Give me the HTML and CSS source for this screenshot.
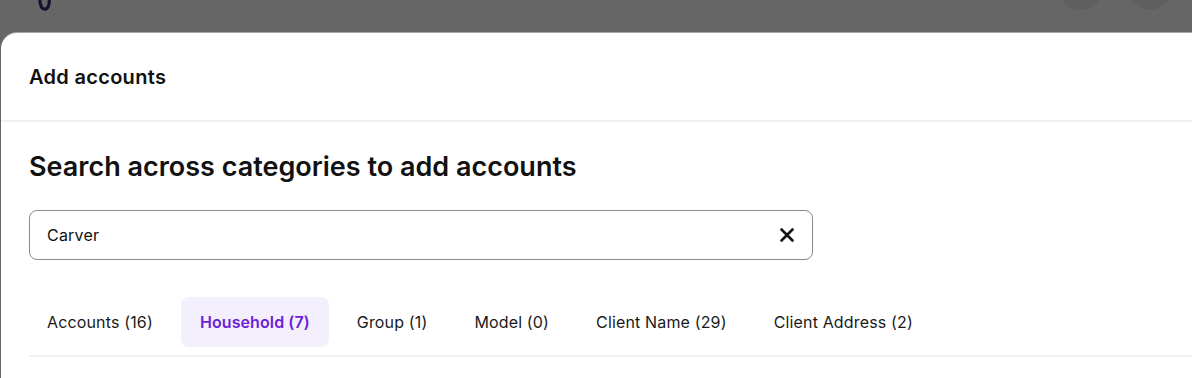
FILE: index.html
```html
<!DOCTYPE html>
<html lang="en">
<head>
<meta charset="utf-8">
<title>Add accounts</title>
<link rel="stylesheet" href="styles.css">
</head>
<body>
<div class="topbar">
  <svg class="logo" width="16" height="24" viewBox="0 0 16 24" aria-hidden="true">
    <path d="M4 6 C2 12 3 20 7 21 C11 22 13 16 12 10" fill="none" stroke="#1b1030" stroke-width="3.2" stroke-linecap="round"/>
  </svg>
  <div class="top-actions">
    <span class="circle"></span>
    <span class="circle"></span>
  </div>
</div>
<div class="modal">
  <div class="modal-header">Add accounts</div>
  <div class="modal-body">
    <h1 class="heading">Search across categories to add accounts</h1>
    <div class="search">
      <span class="search-value">Carver</span>
      <svg class="clear" width="16" height="16" viewBox="0 0 16 16" aria-hidden="true">
        <path d="M2.5 2.5 L13.5 13.5 M13.5 2.5 L2.5 13.5" stroke="#111" stroke-width="2.6" stroke-linecap="round"/>
      </svg>
    </div>
    <div class="tabs">
      <span class="tab">Accounts (16)</span>
      <span class="tab active">Household (7)</span>
      <span class="tab">Group (1)</span>
      <span class="tab">Model (0)</span>
      <span class="tab">Client Name (29)</span>
      <span class="tab">Client Address (2)</span>
    </div>
  </div>
</div>
</body>
</html>
```

FILE: styles.css
```css
html, body {
  margin: 0;
  padding: 0;
  height: 100%;
}
body {
  background: #666666;
  font-family: Inter, "Noto Sans", "Liberation Sans", sans-serif;
  color: #111;
  overflow: hidden;
}
.topbar {
  height: 33px;
  display: flex;
  justify-content: space-between;
  align-items: flex-start;
  padding: 0 20px 0 37px;
  overflow: hidden;
}
.logo {
  margin-top: -12px;
}
.top-actions {
  display: flex;
  gap: 25px;
  margin-top: -34px;
}
.circle {
  width: 44px;
  height: 44px;
  border-radius: 50%;
  background: #5f5f5f;
}
.modal {
  margin-left: 1px;
  background: #fff;
  border-top-left-radius: 16px;
  box-shadow: 0 -1px 0 #a4a4a4;
  height: 345px;
}
.modal-header {
  height: 87px;
  display: flex;
  align-items: center;
  padding: 0 28px;
  font-size: 20px;
  font-weight: 600;
  letter-spacing: 0.3px;
  border-bottom: 2px solid #f0f0f0;
}
.modal-body {
  padding: 26px 0 0 28px;
}
.heading {
  margin: 0;
  font-size: 27px;
  font-weight: 600;
  line-height: 38px;
  letter-spacing: 0;
}
.search {
  margin-top: 24px;
  width: 784px;
  height: 50px;
  box-sizing: border-box;
  border: 1px solid #8a8a8e;
  border-radius: 8px;
  display: flex;
  align-items: center;
  justify-content: space-between;
  padding: 0 17px 0 17px;
}
.search-value {
  font-size: 16px;
  letter-spacing: 0.2px;
}
.tabs {
  margin-top: 37px;
  display: flex;
  gap: 9px;
  padding-bottom: 8px;
  border-bottom: 2px solid #f0f0f0;
}
.tab {
  padding: 0 19px;
  height: 50px;
  display: flex;
  align-items: center;
  font-size: 16px;
  letter-spacing: 0.15px;
  border-radius: 8px;
  color: #1a1a1a;
}
.tab:first-child {
  padding-left: 18px;
}
.tab.active {
  background: #f3effd;
  color: #6c1fd6;
  font-weight: 600;
  letter-spacing: 0.1px;
}
```
